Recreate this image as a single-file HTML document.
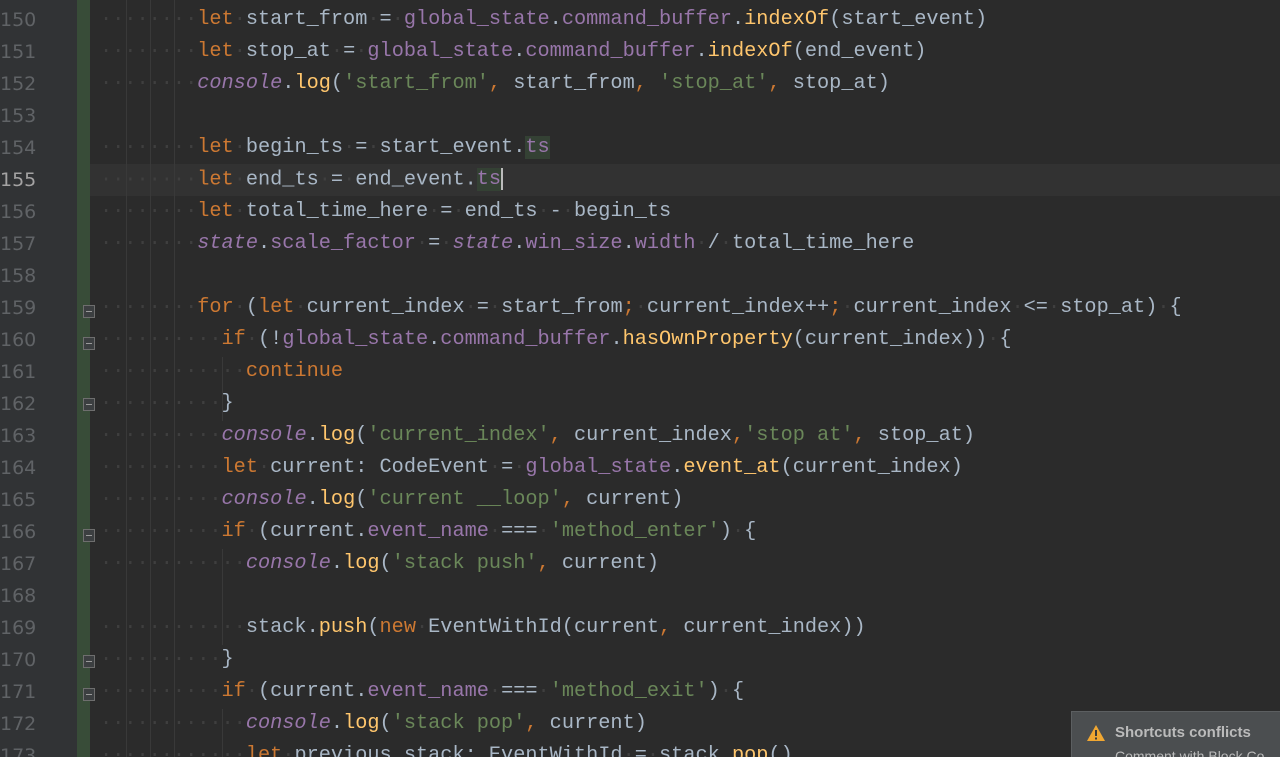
<!DOCTYPE html>
<html><head><meta charset="utf-8"><style>
html,body{margin:0;padding:0;width:1280px;height:757px;overflow:hidden;background:#2b2b2b;position:relative;}
#gut{position:absolute;left:0;top:0;width:77px;height:757px;background:#313335;}
#bar{position:absolute;left:77px;top:0;width:13px;height:757px;background:#384c38;}
.ln{position:absolute;left:0;width:60px;font:19px "DejaVu Sans","Liberation Sans",sans-serif;color:#606366;height:32px;line-height:32px;}
.ln.cur{color:#a4a3a3;}
.row{position:absolute;left:100px;margin-top:5px;height:32px;line-height:32px;font:20.25px "Liberation Mono","DejaVu Sans Mono",monospace;color:#a9b7c6;white-space:pre;}
.curline{position:absolute;left:90px;top:164px;width:1190px;height:32px;background:#323232;}
.k{color:#cc7832}.p{color:#9876aa}.i{color:#9876aa;font-style:italic}.s{color:#6a8759}.f{color:#ffc66d}.d{color:#3f3f3f}
.hl{background:#344134}
.g{position:absolute;width:1px;background:#393939;}
.fold{position:absolute;left:83px;width:12px;height:13px;border:1px solid #6e6e6e;background:#3c3f41;box-sizing:border-box;}
.fold:after{content:"";position:absolute;left:2px;top:5px;width:6px;height:1px;background:#9a9a9a;}
.cursor{display:inline-block;width:2px;height:22px;background:#bbb;vertical-align:middle;}
#pop{position:absolute;left:1071px;top:711px;width:209px;height:46px;background:#4b4e50;border:1px solid #5c5f61;border-bottom:none;border-right:none;box-sizing:border-box;overflow:hidden;}
#pop .t{position:absolute;left:43px;top:12px;font:bold 15px "Liberation Sans",sans-serif;color:#bbbbbb;}
#pop .u{position:absolute;left:43px;top:36px;font:14px "Liberation Sans",sans-serif;color:#bbbbbb;white-space:nowrap;}
</style></head><body>
<div id="gut"></div><div id="bar"></div>
<div class="curline"></div>
<div class="g" style="left:126px;top:0;height:757px"></div>
<div class="g" style="left:150px;top:0;height:757px"></div>
<div class="g" style="left:174px;top:0;height:757px"></div>
<div class="g" style="left:222px;top:357px;height:64px"></div>
<div class="g" style="left:222px;top:549px;height:96px"></div>
<div class="g" style="left:222px;top:709px;height:48px"></div>

<div class="ln" style="top:4px">150</div><div class="ln" style="top:36px">151</div><div class="ln" style="top:68px">152</div><div class="ln" style="top:100px">153</div><div class="ln" style="top:132px">154</div><div class="ln cur" style="top:164px">155</div><div class="ln" style="top:196px">156</div><div class="ln" style="top:228px">157</div><div class="ln" style="top:260px">158</div><div class="ln" style="top:292px">159</div><div class="ln" style="top:324px">160</div><div class="ln" style="top:356px">161</div><div class="ln" style="top:388px">162</div><div class="ln" style="top:420px">163</div><div class="ln" style="top:452px">164</div><div class="ln" style="top:484px">165</div><div class="ln" style="top:516px">166</div><div class="ln" style="top:548px">167</div><div class="ln" style="top:580px">168</div><div class="ln" style="top:612px">169</div><div class="ln" style="top:644px">170</div><div class="ln" style="top:676px">171</div><div class="ln" style="top:708px">172</div><div class="ln" style="top:740px">173</div>

<div class="fold" style="top:305px"></div><div class="fold" style="top:337px"></div><div class="fold" style="top:398px"></div><div class="fold" style="top:529px"></div><div class="fold" style="top:655px"></div><div class="fold" style="top:688px"></div>

<div class="row" style="top:3px"><span class="d">········</span><span class="k">let</span><span class="d">·</span>start_from<span class="d">·</span>=<span class="d">·</span><span class="p">global_state</span>.<span class="p">command_buffer</span>.<span class="f">indexOf</span>(start_event)</div>
<div class="row" style="top:35px"><span class="d">········</span><span class="k">let</span><span class="d">·</span>stop_at<span class="d">·</span>=<span class="d">·</span><span class="p">global_state</span>.<span class="p">command_buffer</span>.<span class="f">indexOf</span>(end_event)</div>
<div class="row" style="top:67px"><span class="d">········</span><span class="i">console</span>.<span class="f">log</span>(<span class="s">'start_from'</span><span class="k">,</span> start_from<span class="k">,</span> <span class="s">'stop_at'</span><span class="k">,</span> stop_at)</div>
<div class="row" style="top:131px"><span class="d">········</span><span class="k">let</span><span class="d">·</span>begin_ts<span class="d">·</span>=<span class="d">·</span>start_event.<span class="p hl">ts</span></div>
<div class="row" style="top:163px"><span class="d">········</span><span class="k">let</span><span class="d">·</span>end_ts<span class="d">·</span>=<span class="d">·</span>end_event.<span class="p hl">ts</span><span class="cursor"></span></div>
<div class="row" style="top:195px"><span class="d">········</span><span class="k">let</span><span class="d">·</span>total_time_here<span class="d">·</span>=<span class="d">·</span>end_ts<span class="d">·</span>-<span class="d">·</span>begin_ts</div>
<div class="row" style="top:227px"><span class="d">········</span><span class="i">state</span>.<span class="p">scale_factor</span><span class="d">·</span>=<span class="d">·</span><span class="i">state</span>.<span class="p">win_size</span>.<span class="p">width</span><span class="d">·</span>/<span class="d">·</span>total_time_here</div>
<div class="row" style="top:291px"><span class="d">········</span><span class="k">for</span><span class="d">·</span>(<span class="k">let</span><span class="d">·</span>current_index<span class="d">·</span>=<span class="d">·</span>start_from<span class="k">;</span><span class="d">·</span>current_index++<span class="k">;</span><span class="d">·</span>current_index<span class="d">·</span>&lt;=<span class="d">·</span>stop_at)<span class="d">·</span>{</div>
<div class="row" style="top:323px"><span class="d">··········</span><span class="k">if</span><span class="d">·</span>(!<span class="p">global_state</span>.<span class="p">command_buffer</span>.<span class="f">hasOwnProperty</span>(current_index))<span class="d">·</span>{</div>
<div class="row" style="top:355px"><span class="d">············</span><span class="k">continue</span></div>
<div class="row" style="top:387px"><span class="d">··········</span>}</div>
<div class="row" style="top:419px"><span class="d">··········</span><span class="i">console</span>.<span class="f">log</span>(<span class="s">'current_index'</span><span class="k">,</span> current_index<span class="k">,</span><span class="s">'stop at'</span><span class="k">,</span> stop_at)</div>
<div class="row" style="top:451px"><span class="d">··········</span><span class="k">let</span><span class="d">·</span>current: CodeEvent<span class="d">·</span>=<span class="d">·</span><span class="p">global_state</span>.<span class="f">event_at</span>(current_index)</div>
<div class="row" style="top:483px"><span class="d">··········</span><span class="i">console</span>.<span class="f">log</span>(<span class="s">'current __loop'</span><span class="k">,</span> current)</div>
<div class="row" style="top:515px"><span class="d">··········</span><span class="k">if</span><span class="d">·</span>(current.<span class="p">event_name</span><span class="d">·</span>===<span class="d">·</span><span class="s">'method_enter'</span>)<span class="d">·</span>{</div>
<div class="row" style="top:547px"><span class="d">············</span><span class="i">console</span>.<span class="f">log</span>(<span class="s">'stack push'</span><span class="k">,</span> current)</div>
<div class="row" style="top:611px"><span class="d">············</span>stack.<span class="f">push</span>(<span class="k">new</span><span class="d">·</span>EventWithId(current<span class="k">,</span> current_index))</div>
<div class="row" style="top:643px"><span class="d">··········</span>}</div>
<div class="row" style="top:675px"><span class="d">··········</span><span class="k">if</span><span class="d">·</span>(current.<span class="p">event_name</span><span class="d">·</span>===<span class="d">·</span><span class="s">'method_exit'</span>)<span class="d">·</span>{</div>
<div class="row" style="top:707px"><span class="d">············</span><span class="i">console</span>.<span class="f">log</span>(<span class="s">'stack pop'</span><span class="k">,</span> current)</div>
<div class="row" style="top:739px"><span class="d">············</span><span class="k">let</span><span class="d">·</span>previous_stack: EventWithId<span class="d">·</span>=<span class="d">·</span>stack.<span class="f">pop</span>()</div>

<div id="pop">
<svg style="position:absolute;left:14px;top:12px" width="20" height="18" viewBox="0 0 20 18"><path d="M10 1 L19 17 L1 17 Z" fill="#f0a732"/><rect x="9" y="6" width="2" height="6" fill="#3a3a3a"/><rect x="9" y="13.5" width="2" height="2" fill="#3a3a3a"/></svg>
<div class="t">Shortcuts conflicts</div>
<div class="u">Comment with Block Co</div>
</div>
</body></html>
